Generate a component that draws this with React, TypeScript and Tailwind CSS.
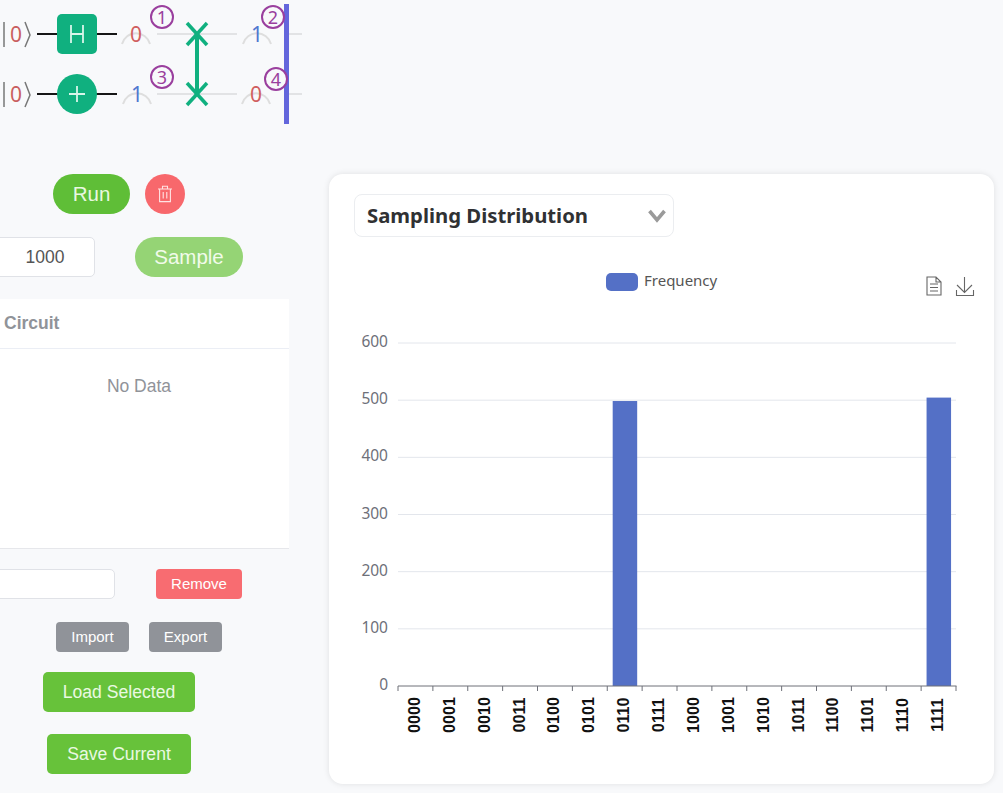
// Quantum circuit sampling panel
const SANS = "font-['Liberation_Sans',Arial,sans-serif]";
const GATE = '#10b07f';
const PURPLE = '#9a3f9e';

const labels = ['0000', '0001', '0010', '0011', '0100', '0101', '0110', '0111', '1000', '1001', '1010', '1011', '1100', '1101', '1110', '1111'];
const ticks = [0, 100, 200, 300, 400, 500, 600];
const bars: Record<string, number> = { '0110': 498.5, '1111': 504.5 };

const X0 = 398;
const STEP = 34.875;
const Y0 = 686;
const yOf = (v: number) => Y0 - (v / 600) * 343;

function Ket({ y }: { y: number }) {
  return (
    <g>
      <line x1="4" x2="4" y1={y - 12} y2={y + 13} stroke="#777" strokeWidth="1.5" />
      <text x="16" y={y + 7.5} textAnchor="middle" fontSize="21" fill="#c9605f">0</text>
      <polyline points={`25,${y - 12} 30,${y + 1} 25,${y + 13}`} fill="none" stroke="#777" strokeWidth="1.5" />
    </g>
  );
}

function Meter({ x, y, value }: { x: number; y: number; value: string }) {
  return (
    <g>
      <path d={`M${x - 14} ${y + 10}A14.5 14.5 0 0 1 ${x + 14} ${y + 10}`} fill="none" stroke="#dedede" strokeWidth="2" />
      <text x={x} y={y + 7.5} textAnchor="middle" fontSize="21" fill={value === '0' ? '#d0605f' : '#5078d0'}>{value}</text>
    </g>
  );
}

function Badge({ x, y, n }: { x: number; y: number; n: number }) {
  return (
    <g>
      <circle cx={x} cy={y} r="11" fill="#f8f9fb" stroke={PURPLE} strokeWidth="2" />
      <text x={x} y={y + 6.5} textAnchor="middle" fontSize="18" fill={PURPLE}>{n}</text>
    </g>
  );
}

function Swap({ y }: { y: number }) {
  return (
    <g stroke={GATE} strokeWidth="3.5">
      <line x1="187" y1={y - 11} x2="207" y2={y + 11} />
      <line x1="207" y1={y - 11} x2="187" y2={y + 11} />
    </g>
  );
}

function Circuit() {
  return (
    <svg viewBox="0 0 329 130" className="w-[329px] h-[130px] block font-['Noto_Sans',sans-serif]">
      <Ket y={34} />
      <Ket y={94} />
      <g stroke="#e2e3e5" strokeWidth="2">
        <line x1="157" y1="34" x2="237" y2="34" />
        <line x1="157" y1="94" x2="237" y2="94" />
        <line x1="287" y1="34" x2="302" y2="34" />
        <line x1="287" y1="94" x2="302" y2="94" />
      </g>
      <g stroke="#161616" strokeWidth="2">
        <line x1="37" y1="34" x2="117" y2="34" />
        <line x1="37" y1="94" x2="117" y2="94" />
      </g>
      <rect x="57" y="14" width="40" height="40" rx="5" fill={GATE} />
      <path d="M71 25V43M83 25V43M71 34H83" stroke="#d9f5ea" strokeWidth="1.8" fill="none" />
      <circle cx="77" cy="94" r="20" fill={GATE} />
      <path d="M77 86V102M69 94H85" stroke="#d9f5ea" strokeWidth="1.8" fill="none" />
      <Meter x={136} y={34} value="0" />
      <Meter x={137} y={94} value="1" />
      <Meter x={257} y={34} value="1" />
      <Meter x={256} y={94} value="0" />
      <line x1="197" y1="34" x2="197" y2="94" stroke={GATE} strokeWidth="4" />
      <Swap y={34} />
      <Swap y={94} />
      <rect x="284" y="4" width="5" height="120" fill="#6366dc" />
      <Badge x={162} y={17} n={1} />
      <Badge x={273} y={17} n={2} />
      <Badge x={162} y={77} n={3} />
      <Badge x={276} y={79} n={4} />
    </svg>
  );
}

function TrashIcon() {
  return (
    <svg viewBox="0 0 16 18" className="w-[16px] h-[18px]" fill="none" stroke="#ffe3e3" strokeWidth="1.1">
      <path d="M1 4H15M5.5 4V1.2H10.5V4M2.6 4V16.6H13.4V4M6.2 7V13.5M9.8 7V13.5" />
    </svg>
  );
}

function Chart() {
  return (
    <svg viewBox="354 260 615 500" className="w-[615px] h-[500px] block mt-[23px] font-['Noto_Sans',sans-serif] overflow-visible">
      <rect x="606" y="273" width="32" height="18" rx="5" fill="#5470c6" />
      <text x="644" y="286" fontSize="15" fill="#555">Frequency</text>

      <g fill="none" stroke="#666" strokeWidth="1.1">
        <path d="M927 277H936L941 282V295H927ZM936 277V282H941M930 284H938M930 287.5H938M930 291H938" />
        <path d="M964.5 277V292M957 285L964.5 292.5L972 285M956.5 290V295.5H973.5V290" />
      </g>

      {ticks.map(t => (
        <g key={t}>
          {t > 0 && <line x1={X0} x2="956" y1={yOf(t)} y2={yOf(t)} stroke="#e3e6ec" strokeWidth="1" />}
          <text x="388" y={yOf(t) + 4} textAnchor="end" fontSize="15.5" fill="#6e7079">{t}</text>
        </g>
      ))}

      {labels.map((l, i) => {
        const cx = X0 + STEP * (i + 0.5);
        const v = bars[l];
        return (
          <g key={l}>
            {v && <rect x={cx - 12} y={yOf(v)} width="24.5" height={Y0 - yOf(v)} fill="#5470c6" />}
            <text
              x={cx - 1.5}
              y="715"
              transform={`rotate(-90 ${cx - 1.5} 715)`}
              textAnchor="middle"
              dominantBaseline="central"
              fontSize="16.2"
              fontWeight="700"
              fontFamily="'Liberation Sans', Arial, sans-serif"
              fill="#111"
            >
              {l}
            </text>
          </g>
        );
      })}

      <line x1={X0} x2="956.5" y1={Y0} y2={Y0} stroke="#6e7079" strokeWidth="1" />
      {labels.concat('').map((l, i) => (
        <line key={i} x1={X0 + STEP * i} x2={X0 + STEP * i} y1={Y0} y2={Y0 + 5} stroke="#6e7079" strokeWidth="1" />
      ))}
    </svg>
  );
}

export default function App() {
  return (
    <div className={`w-[1003px] h-[793px] overflow-hidden bg-[#f8f9fb] flex ${SANS}`}>
      {/* Colonne gauche */}
      <div className="w-[329px] shrink-0 flex flex-col">
        <Circuit />

        <div className="flex items-center gap-[15px] mt-[44px] ml-[53px]">
          <button className="w-[77px] h-[40px] rounded-full bg-[#5fbe37] text-[#e9f8e0] text-[20.5px]">Run</button>
          <button className="w-[40px] h-[40px] rounded-full bg-[#f8686c] flex items-center justify-center">
            <TrashIcon />
          </button>
        </div>

        <div className="flex items-center mt-[23px] ml-[-5px]">
          <input
            readOnly
            value="1000"
            className="w-[100px] h-[40px] rounded-[5px] bg-white border border-[#e0e2e7] text-center text-[17.5px] text-[#555] outline-none"
          />
          <button className="ml-[40px] w-[108px] h-[40px] rounded-full bg-[#95d475] text-[#f1fbea] text-[20.5px]">Sample</button>
        </div>

        <div className="w-[300px] h-[250px] ml-[-11px] mt-[22px] bg-white border-b border-[#e6e7eb]">
          <div className="h-[50px] border-b border-[#ebeef5] pl-[15px] flex items-center text-[17.5px] font-bold text-[#909399]">Circuit</div>
          <div className="pt-[26px] text-center text-[17.5px] leading-[22px] text-[#909399]">No Data</div>
        </div>

        <div className="flex items-center mt-[20px] ml-[-25px]">
          <input
            readOnly
            className="w-[140px] h-[30px] rounded-[5px] bg-white border border-[#e0e2e7] outline-none"
          />
          <button className="ml-[41px] w-[86px] h-[30px] pt-[1px] rounded-[4px] bg-[#f86c71] text-[#fff] text-[15px]">Remove</button>
        </div>

        <div className="flex items-center gap-[20px] mt-[23px] ml-[56px]">
          <button className="w-[73px] h-[30px] pt-[1px] rounded-[4px] bg-[#909399] text-white text-[15px]">Import</button>
          <button className="w-[73px] h-[30px] pt-[1px] rounded-[4px] bg-[#909399] text-white text-[15px]">Export</button>
        </div>

        <button className="mt-[20px] ml-[43px] w-[152px] h-[40px] rounded-[5px] bg-[#67c23a] text-[#eaf9e2] text-[17.6px]">Load Selected</button>
        <button className="mt-[22px] ml-[47px] w-[144px] h-[40px] rounded-[5px] bg-[#67c23a] text-[#eaf9e2] text-[17.6px]">Save Current</button>
      </div>

      {/* Carte du graphique */}
      <div className="mt-[174px] w-[665px] h-[610px] rounded-[14px] bg-white shadow-[0_0_6px_rgba(0,0,0,0.1)] pl-[25px] pt-[20px]">
        <div className="w-[320px] h-[43px] rounded-[8px] border border-[#ebedf0] pl-[12px] pr-[7px] flex items-center justify-between font-['Noto_Sans',sans-serif]">
          <span className="text-[20.3px] font-bold text-[#303133]">Sampling Distribution</span>
          <svg viewBox="0 0 18 14" className="w-[18px] h-[14px]" fill="none" stroke="#9a9a9a" strokeWidth="3.6">
            <path d="M1.5 2L9 11L16.5 2" />
          </svg>
        </div>
        <Chart />
      </div>
    </div>
  );
}
